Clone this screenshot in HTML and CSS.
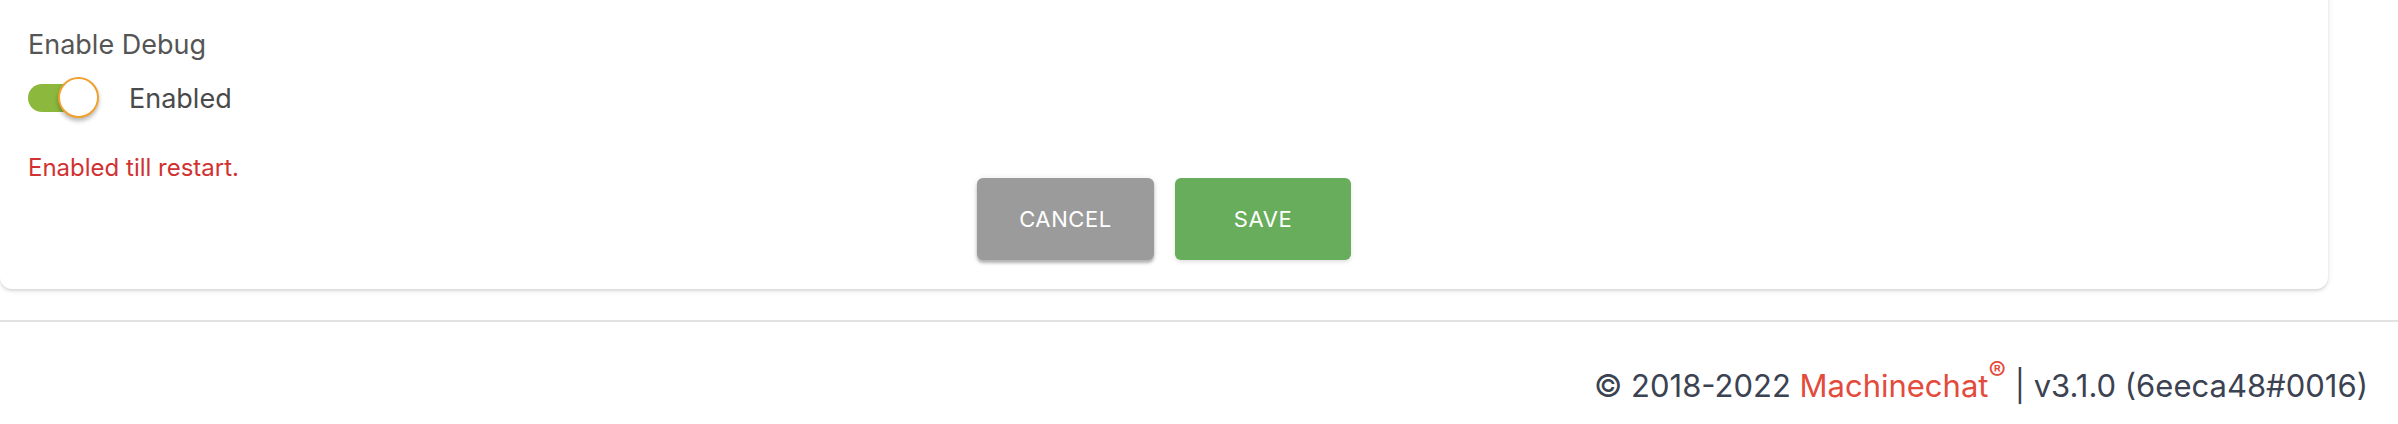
FILE: index.html
```html
<!DOCTYPE html>
<html>
<head>
<meta charset="utf-8">
<link rel="stylesheet" href="styles.css">
</head>
<body>
<div class="page">
  <div class="card">
    <div class="field-label">Enable Debug</div>
    <div class="switch-row">
      <span class="switch">
        <span class="track"></span>
        <span class="thumb"></span>
      </span>
      <span class="switch-label">Enabled</span>
    </div>
    <div class="helper">Enabled till restart.</div>
    <div class="actions">
      <button class="btn btn-cancel">CANCEL</button>
      <button class="btn btn-save">SAVE</button>
    </div>
  </div>
  <footer class="footer">
    <span class="copy">© 2018-2022 <span class="brand">Machinechat<sup class="reg">®</sup></span> | v3.1.0 (6eeca48#0016)</span>
  </footer>
</div>
</body>
</html>
```

FILE: styles.css
```css
* { box-sizing: border-box; }
html, body { margin: 0; padding: 0; background: #ffffff; }
body {
  font-family: Inter, "Noto Sans", "Liberation Sans", sans-serif;
  width: 2398px;
  height: 424px;
  overflow: hidden;
}
.page {
  display: flex;
  flex-direction: column;
}
.card {
  width: 2328px;
  margin-top: -20px;
  background: #fff;
  border-radius: 12px;
  box-shadow: 0 2px 3px rgba(0,0,0,0.12), 0 1px 8px rgba(0,0,0,0.06);
  padding: 50px 28px 29px 28px;
  display: flex;
  flex-direction: column;
}
.field-label {
  font-size: 27px;
  line-height: 30px;
  color: #555555;
  height: 30px;
}
.switch-row {
  display: flex;
  align-items: center;
  margin-top: 13px;
  height: 50px;
}
.switch {
  position: relative;
  width: 70px;
  height: 42px;
  display: inline-block;
}
.track {
  position: absolute;
  left: 0;
  top: 7px;
  width: 68px;
  height: 28px;
  border-radius: 14px;
  background: #8bb83d;
}
.thumb {
  position: absolute;
  left: 30px;
  top: 0;
  width: 41px;
  height: 41px;
  border-radius: 50%;
  background: #fff;
  border: 2.5px solid #f0a12e;
  box-shadow: 0 3px 4px rgba(0,0,0,0.28);
}
.switch-label {
  margin-left: 31px;
  font-size: 27px;
  color: #4a4a4a;
}
.helper {
  margin-top: 32px;
  font-size: 24px;
  line-height: 26px;
  color: #d03232;
}
.actions {
  display: flex;
  justify-content: center;
  gap: 21px;
  margin-top: -3px;
}
.btn {
  height: 82px;
  border: none;
  border-radius: 6px;
  color: #fff;
  font-family: Inter, "Noto Sans", "Liberation Sans", sans-serif;
  font-size: 22px;
  font-weight: 400;
  letter-spacing: 0.6px;
}
.btn-cancel {
  width: 177px;
  background: #9b9b9b;
  box-shadow: 0 3px 3px rgba(0,0,0,0.25), 0 1px 6px rgba(0,0,0,0.12);
}
.btn-save {
  width: 176px;
  background: #67ad5b;
  box-shadow: 0 2px 4px rgba(0,0,0,0.12);
}
.footer {
  margin-top: 31px;
  border-top: 2px solid #e2e2e2;
  display: flex;
  justify-content: flex-end;
  padding: 46px 30px 0 0;
}
.copy {
  font-size: 31px;
  color: #3b4252;
  line-height: 36px;
}
.brand { color: #e34b3c; }
.reg {
  font-size: 26px;
  vertical-align: top;
  line-height: 1;
  position: relative;
  top: -10px;
}
```
